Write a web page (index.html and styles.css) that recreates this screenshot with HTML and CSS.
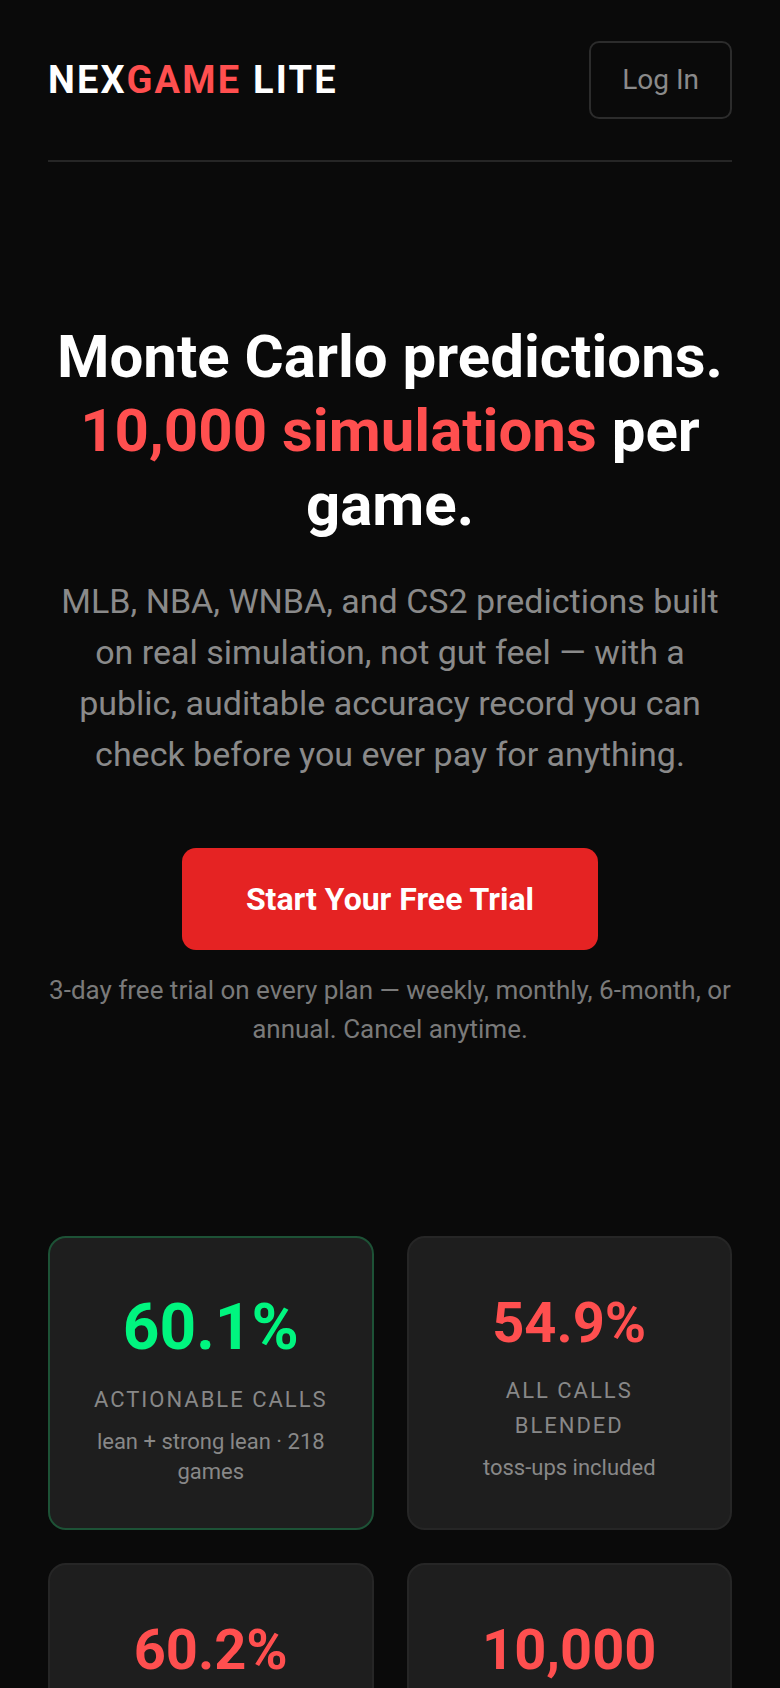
FILE: index.html
```html
<!DOCTYPE html>
<html lang="en">
<head>
<meta charset="utf-8"/>
<meta content="width=device-width, initial-scale=1.0" name="viewport"/>
<title>NexGame Lite</title>
<link rel="stylesheet" href="styles.css">
</head>
<body>
<div class="page">
  <header class="topbar">
    <div class="logo">NEX<span class="accent">GAME</span> LITE</div>
    <a class="login-btn" href="#">Log In</a>
  </header>

  <section class="hero">
    <h1>Monte Carlo predictions. <span class="accent">10,000 simulations</span> per game.</h1>
    <p class="lead">MLB, NBA, WNBA, and CS2 predictions built on real simulation, not gut feel — with a public, auditable accuracy record you can check before you ever pay for anything.</p>
    <a class="cta" href="#">Start Your Free Trial</a>
    <p class="note">3-day free trial on every plan — weekly, monthly, 6-month, or annual. Cancel anytime.</p>
  </section>

  <section class="stats">
    <div class="stat highlight">
      <div class="num green">60.1%</div>
      <div class="label">Actionable Calls</div>
      <div class="sub">lean + strong lean · 218 games</div>
    </div>
    <div class="stat">
      <div class="num">54.9%</div>
      <div class="label">All Calls Blended</div>
      <div class="sub">toss-ups included</div>
    </div>
    <div class="stat">
      <div class="num">60.2%</div>
      <div class="label">Strong Lean Calls</div>
      <div class="sub">highest confidence tier</div>
    </div>
    <div class="stat">
      <div class="num">10,000</div>
      <div class="label">Simulations</div>
      <div class="sub">per game, every game</div>
    </div>
  </section>
</div>
</body>
</html>
```

FILE: styles.css
```css
body {
  margin: 0;
  background: #0a0a0a;
  color: #fff;
  font-family: Roboto, "Liberation Sans", sans-serif;
}
.page {
  padding: 0 48px 60px;
}
.accent { color: #ff4f4f; }

.topbar {
  display: flex;
  justify-content: space-between;
  align-items: center;
  padding: 41px 0 41px;
  border-bottom: 2px solid #262626;
}
.logo {
  font-size: 38px;
  font-weight: 700;
  letter-spacing: 2.2px;
}
.login-btn {
  display: inline-block;
  padding: 20px 31px;
  font-size: 28px;
  color: #8a8a8a;
  text-decoration: none;
  border: 2px solid #2c2c2c;
  border-radius: 10px;
  line-height: 1.2;
}

.hero {
  text-align: center;
  padding-top: 158px;
}
.hero h1 {
  margin: 0;
  font-size: 60px;
  line-height: 74px;
  font-weight: 700;
}
.lead {
  margin: 34px 0 0;
  font-size: 34px;
  line-height: 51px;
  color: #8a8a8a;
}
.cta {
  display: inline-block;
  margin-top: 68px;
  padding: 32px 64px;
  background: #e52323;
  color: #fff;
  font-size: 32px;
  font-weight: 700;
  line-height: 38px;
  border-radius: 14px;
  text-decoration: none;
}
.note {
  margin: 21px 0 0;
  font-size: 26px;
  line-height: 39px;
  color: #7a7a7a;
}

.stats {
  display: grid;
  grid-template-columns: 1fr 1fr;
  gap: 33px;
  margin-top: 187px;
}
.stat {
  display: flex;
  flex-direction: column;
  align-items: center;
  text-align: center;
  padding: 53px 40px 41px;
  background: #1e1e1e;
  border: 2px solid #262626;
  border-radius: 18px;
}
.stat.highlight { border-color: #1d5236; }
.num {
  font-size: 56px;
  font-weight: 700;
  line-height: 1.15;
  color: #ff4f4f;
}
.num.green {
  font-size: 64px;
  color: #00f57f;
}
.label {
  margin-top: 18px;
  font-size: 22px;
  line-height: 35px;
  letter-spacing: 2px;
  text-transform: uppercase;
  color: #888;
}
.sub {
  margin-top: 10px;
  font-size: 22px;
  line-height: 30px;
  color: #888;
}
```
